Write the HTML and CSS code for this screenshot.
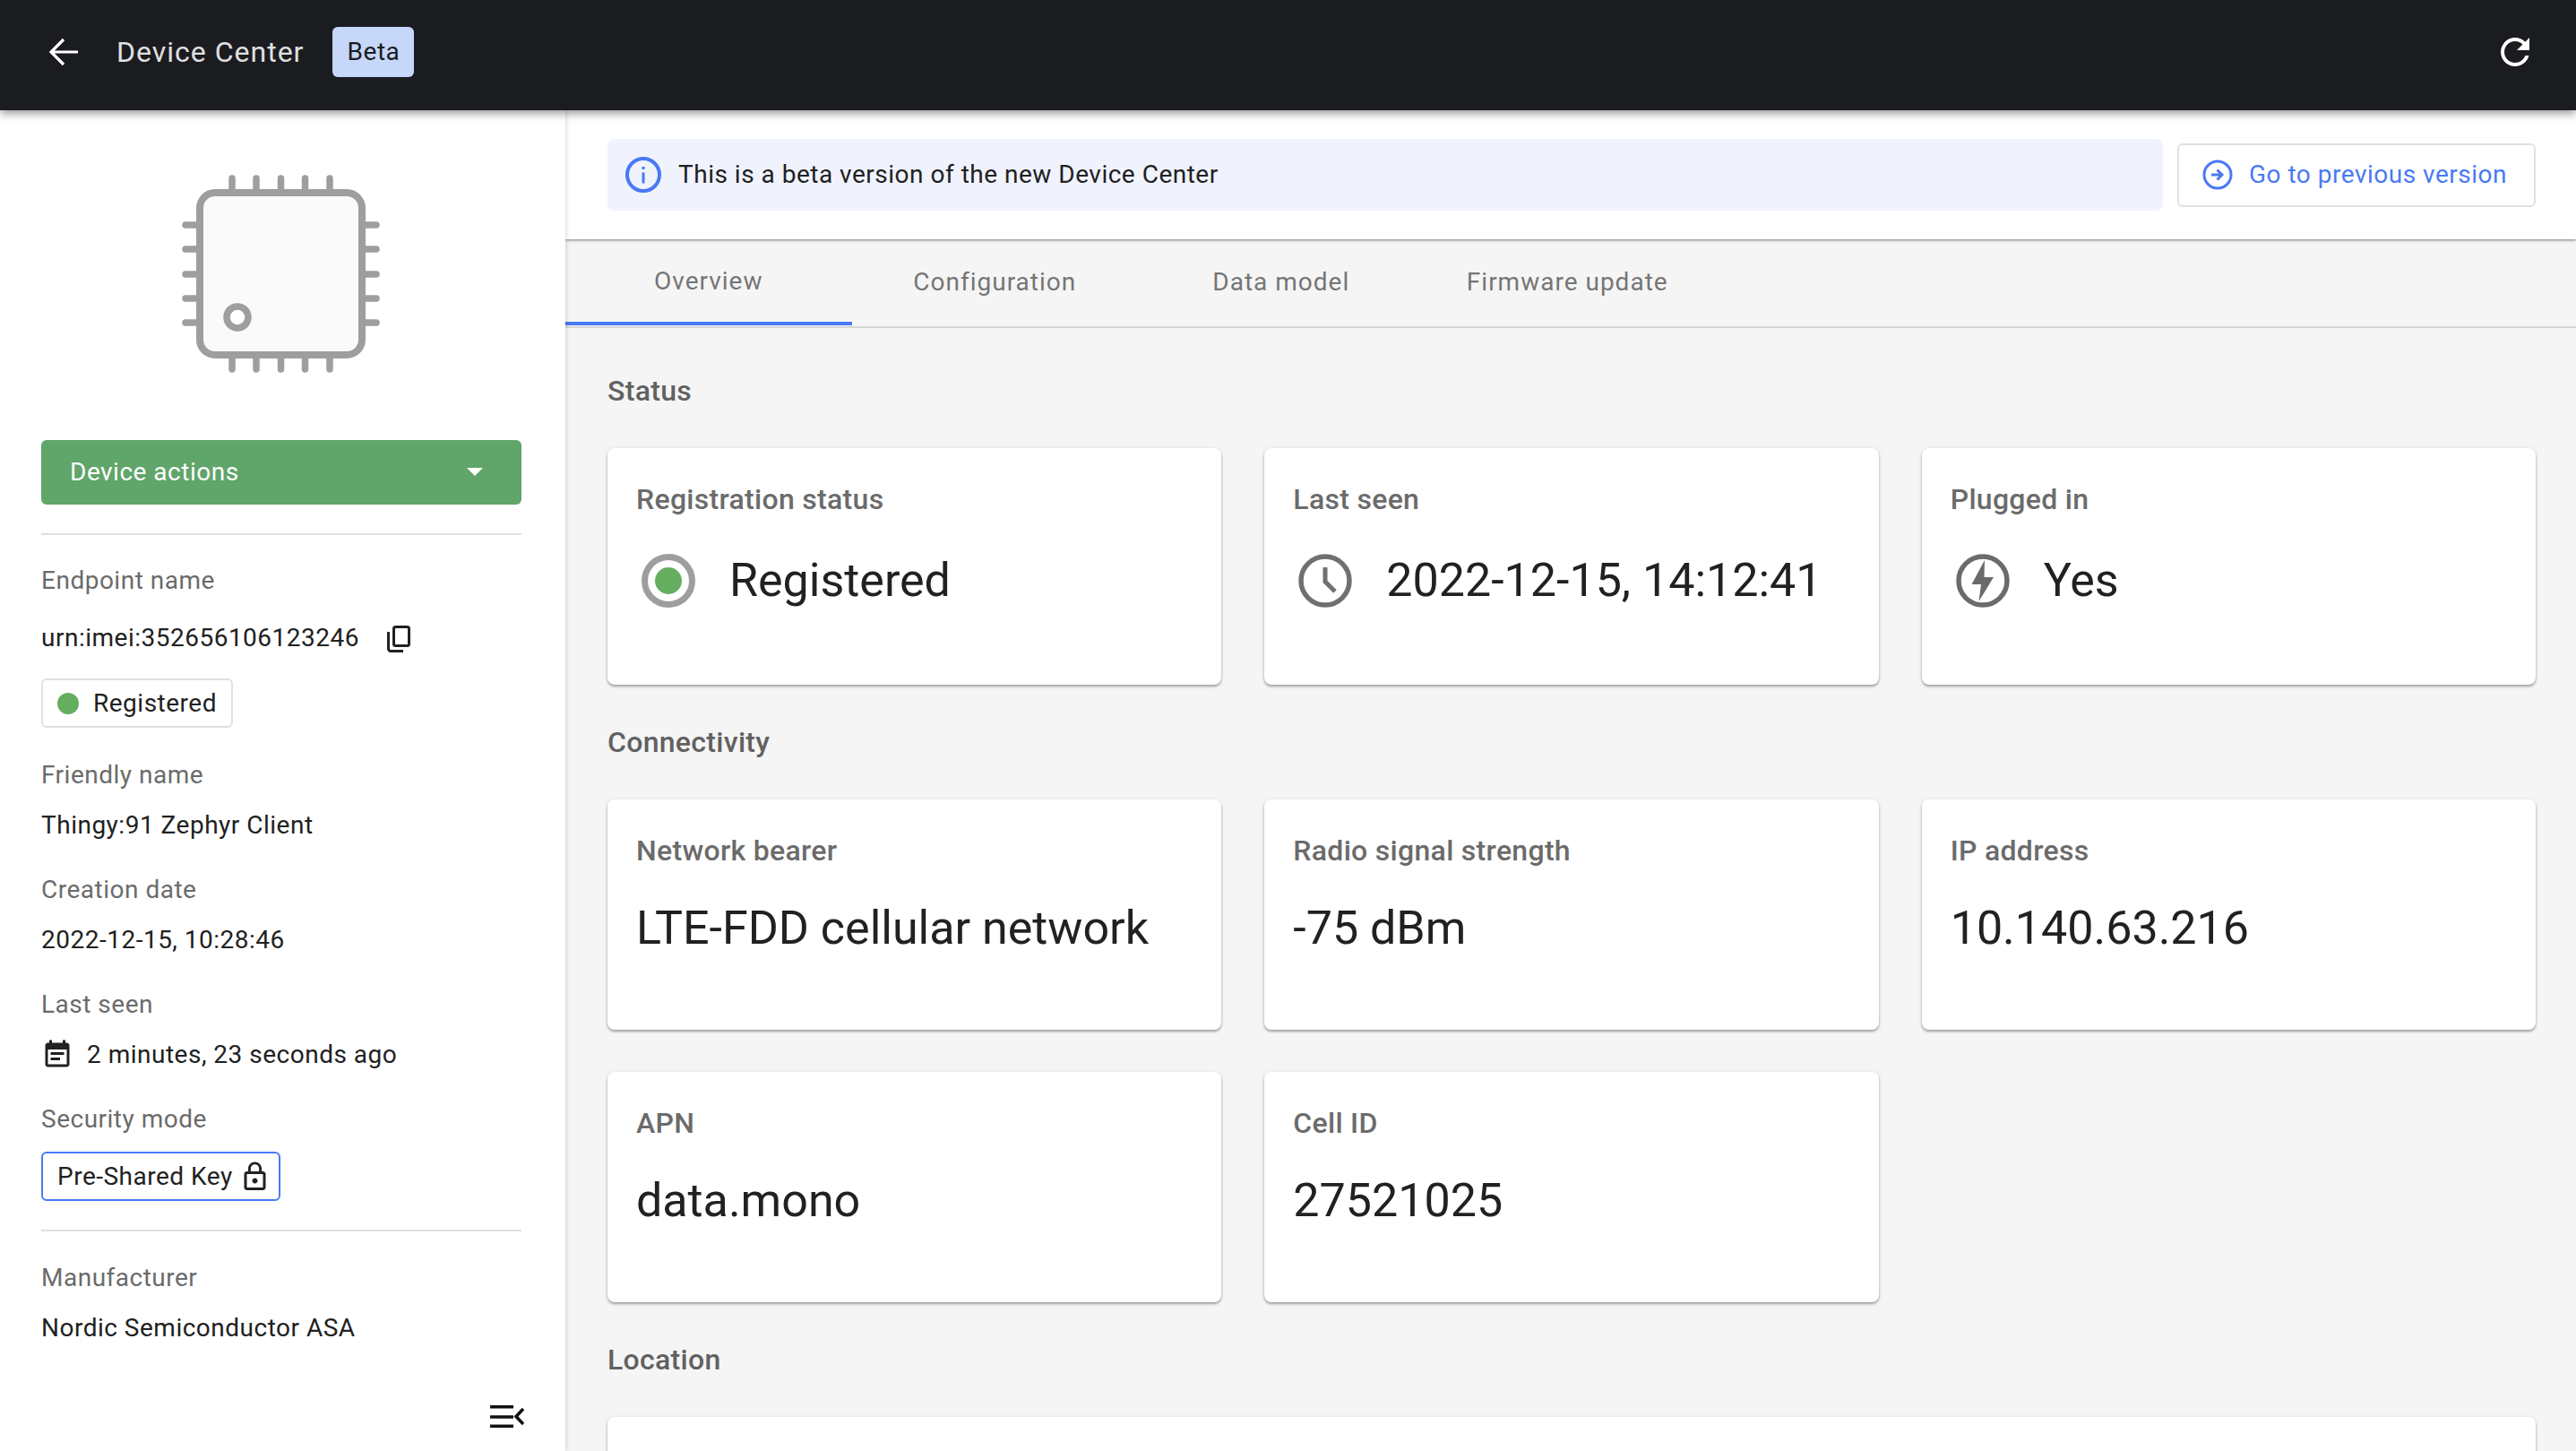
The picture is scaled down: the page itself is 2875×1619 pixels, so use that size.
FILE: index.html
```html
<!DOCTYPE html>
<html lang="en">
<head>
<meta charset="utf-8">
<title>Device Center</title>
<link rel="stylesheet" href="styles.css">
</head>
<body>
<header class="topbar">
  <svg class="back-icon" viewBox="0 0 36 36"><path d="M35 18H5M19 4 5 18l14 14" fill="none" stroke="#fff" stroke-width="3.2"/></svg>
  <span class="app-title">Device Center</span>
  <span class="beta">Beta</span>
  <svg class="refresh-icon" viewBox="0 0 24 24"><path fill="#fff" d="M17.65 6.35C16.2 4.9 14.21 4 12 4c-4.42 0-7.99 3.58-7.99 8s3.57 8 7.99 8c3.73 0 6.84-2.55 7.73-6h-2.08c-.82 2.33-3.04 4-5.65 4-3.31 0-6-2.69-6-6s2.69-6 6-6c1.66 0 3.14.69 4.22 1.78L13 11h7V4l-2.35 2.35z"/></svg>
</header>
<div class="layout">
  <aside class="sidebar">
    <svg class="chip" viewBox="0 0 221 221">
      <g stroke="#9e9e9e" stroke-width="7.5" stroke-linecap="round" fill="none">
        <path d="M56 4v14M83 4v14M110.500 4v14M137.500 4v14M165 4v14M56 203v14M83 203v14M110.500 203v14M137.500 203v14M165 203v14"/>
        <path d="M4 56h14M4 83h14M4 111h14M4 138h14M4 165h14M203 56h14M203 83h14M203 111h14M203 138h14M203 165h14"/>
      </g>
      <rect x="20" y="20" width="181" height="181" rx="17" fill="#fafafa" stroke="#9e9e9e" stroke-width="8"/>
      <circle cx="62" cy="159" r="12" fill="#fff" stroke="#9e9e9e" stroke-width="7.500"/>
    </svg>
    <button class="actions"><span>Device actions</span><i class="caret"></i></button>
    <div class="divider first"></div>
    <div class="label l-first">Endpoint name</div>
    <div class="value v-endpoint"><span>urn:imei:352656106123246</span>
      <svg class="copy-icon" viewBox="0 0 26 30"><path d="M9.500 1.500h13a2 2 0 0 1 2 2v17a2 2 0 0 1-2 2h-13a2 2 0 0 1-2-2v-17a2 2 0 0 1 2-2ZM1.500 7v19a2.500 2.500 0 0 0 2.500 2.500h14" fill="none" stroke="#212121" stroke-width="3"/></svg>
    </div>
    <div class="chip-tag status-tag"><i class="dot"></i>Registered</div>
    <div class="label">Friendly name</div>
    <div class="value">Thingy:91 Zephyr Client</div>
    <div class="label tight">Creation date</div>
    <div class="value">2022-12-15, 10:28:46</div>
    <div class="label tight">Last seen</div>
    <div class="value v-seen">
      <svg class="event-icon" viewBox="0 0 24 24"><path fill="#212121" d="M17 10H7v2h10v-2zm2-7h-1V1h-2v2H8V1H6v2H5c-1.110 0-1.990.9-1.990 2L3 19c0 1.100.89 2 2 2h14c1.100 0 2-.9 2-2V5c0-1.100-.9-2-2-2zm0 16H5V8h14v11zm-5-5H7v2h7v-2z"/></svg>
      <span>2 minutes, 23 seconds ago</span>
    </div>
    <div class="label l-security">Security mode</div>
    <div class="chip-tag key-tag">Pre-Shared Key
      <svg class="lock-icon" viewBox="0 0 24 24"><path fill="#212121" d="M12 17c1.100 0 2-.9 2-2s-.9-2-2-2-2 .9-2 2 .9 2 2 2zm6-9h-1V6c0-2.760-2.240-5-5-5S7 3.240 7 6v2H6c-1.100 0-2 .9-2 2v10c0 1.100.9 2 2 2h12c1.100 0 2-.9 2-2V10c0-1.100-.9-2-2-2zM8.900 6c0-1.710 1.390-3.100 3.100-3.100 1.710 0 3.100 1.390 3.100 3.100v2H8.900V6zM18 20H6V10h12v10z"/></svg>
    </div>
    <div class="divider second"></div>
    <div class="label tight">Manufacturer</div>
    <div class="value">Nordic Semiconductor ASA</div>
    <svg class="collapse-icon" viewBox="0 0 38 25"><path d="M0 1.750h26M0 13h26M0 23.250h26" stroke="#111" stroke-width="3.500"/><path d="M37 4 29 12.500l8 8.500" fill="none" stroke="#111" stroke-width="3.500"/></svg>
  </aside>
  <main class="main">
    <div class="notice-bar">
      <div class="notice">
        <svg class="info-icon" viewBox="0 0 40 40"><circle cx="20" cy="20" r="18" fill="none" stroke="#4a79f5" stroke-width="4"/><path d="M20 17.500v12" stroke="#4a79f5" stroke-width="3"/><circle cx="20" cy="12.500" r="1.800" fill="#4a79f5"/></svg>
        <span>This is a beta version of the new Device Center</span>
      </div>
      <button class="prev-btn">
        <svg class="go-icon" viewBox="0 0 34 34"><circle cx="17" cy="17" r="15" fill="none" stroke="#4a79f5" stroke-width="3"/><path d="M10 17h11M16.500 11.500 22 17l-5.500 5.500" fill="none" stroke="#4a79f5" stroke-width="3"/></svg>
        <span>Go to previous version</span>
      </button>
    </div>
    <nav class="tabs">
      <div class="tab active">Overview</div>
      <div class="tab">Configuration</div>
      <div class="tab">Data model</div>
      <div class="tab">Firmware update</div>
    </nav>
    <section class="content">
      <h2 class="heading h-status">Status</h2>
      <div class="grid tall">
        <div class="card">
          <div class="card-label">Registration status</div>
          <div class="card-value">
            <svg class="card-icon" viewBox="0 0 60 60"><circle cx="30" cy="30" r="26.500" fill="none" stroke="#9e9e9e" stroke-width="7"/><circle cx="30" cy="30" r="15" fill="#66ae5f"/></svg>
            <span>Registered</span>
          </div>
        </div>
        <div class="card">
          <div class="card-label">Last seen</div>
          <div class="card-value">
            <svg class="card-icon" viewBox="0 0 60 60"><circle cx="30" cy="30" r="27" fill="none" stroke="#707070" stroke-width="5.500"/><path d="M30 15v16l11 11" fill="none" stroke="#707070" stroke-width="5"/></svg>
            <span>2022-12-15, 14:12:41</span>
          </div>
        </div>
        <div class="card">
          <div class="card-label">Plugged in</div>
          <div class="card-value">
            <svg class="card-icon" viewBox="0 0 60 60"><circle cx="30" cy="30" r="27" fill="none" stroke="#6b6b6b" stroke-width="5.500"/><path d="M32 7 17.500 34H28l-2.500 19L42 26H31.500Z" fill="#6b6b6b"/></svg>
            <span>Yes</span>
          </div>
        </div>
      </div>
      <h2 class="heading">Connectivity</h2>
      <div class="grid">
        <div class="card"><div class="card-label">Network bearer</div><div class="card-value plain">LTE-FDD cellular network</div></div>
        <div class="card"><div class="card-label">Radio signal strength</div><div class="card-value plain">-75 dBm</div></div>
        <div class="card"><div class="card-label">IP address</div><div class="card-value plain">10.140.63.216</div></div>
        <div class="card"><div class="card-label">APN</div><div class="card-value plain">data.mono</div></div>
        <div class="card"><div class="card-label">Cell ID</div><div class="card-value plain">27521025</div></div>
      </div>
      <h2 class="heading">Location</h2>
      <div class="card location"></div>
    </section>
  </main>
</div>
</body>
</html>
```
FILE: styles.css
```css
* { box-sizing: border-box; }
html, body { margin: 0; height: 100%; }
body {
  width: 2875px; height: 1619px; overflow: hidden;
  display: flex; flex-direction: column;
  font-family: Roboto, "Liberation Sans", sans-serif;
  color: #212121; background: #f5f5f5;
}
.topbar {
  height: 123px; flex: none; position: relative; z-index: 3;
  display: flex; align-items: center;
  padding: 0 45px 8px 52px;
  background: #1b1c20;
  box-shadow: 0 3px 10px rgba(0,0,0,.45);
}
.back-icon { width: 36px; height: 36px; flex: none; }
.app-title { margin-left: 42px; font-size: 32px; color: #e0e0e0; letter-spacing: 1px; }
.beta {
  margin-left: 32px; width: 91px; height: 56px;
  display: flex; align-items: center; justify-content: center;
  font-size: 28px; letter-spacing: .5px; background: #c6d7fa; color: #1b1c20; border-radius: 6px;
}
.refresh-icon { margin-left: auto; margin-right: -1px; width: 48px; height: 48px; }
.layout { flex: 1; display: flex; min-height: 0; }
.sidebar {
  width: 631px; flex: none; position: relative; z-index: 2;
  display: flex; flex-direction: column; align-items: flex-start;
  padding: 0 49px 26px 46px;
  background: #fff;
  box-shadow: 1px 0 5px rgba(0,0,0,.16);
  letter-spacing: .5px;
}
.chip { width: 221px; height: 221px; margin: 72px 0 0 157px; flex: none; }
.actions {
  width: 536px; height: 72px; margin-top: 75px; flex: none;
  display: flex; align-items: center; justify-content: space-between;
  padding: 0 43px 1px 32px; border: 0; border-radius: 6px;
  background: #60a56a; color: #fff; font: 400 28px Roboto, sans-serif; letter-spacing: .5px;
}
.caret { width: 0; height: 0; border: 9px solid transparent; border-top-color: #fff; border-bottom: 0; }
.divider { width: 536px; height: 2px; flex: none; background: #e0e0e0; }
.divider.first { margin-top: 32px; }
.divider.second { margin-top: 32px; }
.label { margin-top: 33px; font-size: 28px; line-height: 40px; color: #6b6b6b; }
.label.tight { margin-top: 32px; }
.label.l-first { margin-top: 31px; }
.label.l-security { margin-top: 32px; }
.value { margin-top: 16px; font-size: 28px; line-height: 40px; }
.v-endpoint { margin-top: 24px; display: flex; align-items: center; }
.copy-icon { width: 26px; height: 30px; margin: 2px 0 0 31px; }
.v-seen { margin-top: 16px; display: flex; align-items: center; }
.event-icon { width: 36px; height: 36px; }
.v-seen span { margin-left: 15px; }
.chip-tag {
  height: 55px; display: flex; align-items: center;
  font-size: 28px; border-radius: 6px; background: #fff;
}
.status-tag { margin-top: 25px; width: 214px; padding-left: 16px; border: 2px solid #e0e0e0; }
.dot { width: 24px; height: 24px; margin-right: 16px; border-radius: 50%; background: #66ae5f; }
.key-tag { margin-top: 16px; width: 267px; padding-left: 16px; border: 2px solid #4a79f5; }
.lock-icon { width: 37px; height: 36px; margin-left: 6px; }
.collapse-icon { width: 38px; height: 25px; margin: auto 0 0 501px; flex: none; }
.main { flex: 1; min-width: 0; overflow: hidden; }
.notice-bar {
  height: 144px; display: flex; align-items: center; gap: 16px;
  padding: 0 45px 0 47px; background: #fff;
  box-shadow: 0 1px 3px rgba(0,0,0,.5);
  position: relative;
}
.notice {
  flex: 1; height: 80px; display: flex; align-items: center;
  padding-left: 20px; border-radius: 8px; background: #f0f3fe;
  font-size: 28px; letter-spacing: .5px;
}
.notice span { position: relative; top: -1px; }
.info-icon { width: 40px; height: 40px; margin-right: 19px; }
.prev-btn {
  width: 400px; height: 71px; display: flex; align-items: center;
  padding: 0 0 0 26px; background: #fff; border: 2px solid #e0e0e0; border-radius: 6px;
  color: #4a79f5; font: 400 28px Roboto, sans-serif; letter-spacing: .5px;
}
.prev-btn span { position: relative; top: -1px; }
.go-icon { width: 34px; height: 34px; margin-right: 18px; }
.tabs { height: 99px; display: flex; border-bottom: 2px solid #d6d6d6; }
.tab {
  width: 319.500px; height: 97px; padding-bottom: 3px; display: flex; align-items: center; justify-content: center;
  font-size: 28px; letter-spacing: 1px; color: #757575;
}
.tab.active { border-bottom: 4px solid #4a79f5; padding-bottom: 0; height: 96px; }
.content { padding: 0 45px 0 47px; }
.heading { margin: 44px 0 0; font-size: 32px; font-weight: 500; line-height: 40px; letter-spacing: .3px; color: #616161; }
.h-status { margin-top: 50px; }
.grid { margin-top: 44px; display: grid; grid-template-columns: repeat(3, 1fr); gap: 47px 48px; }
.card {
  height: 257px; padding: 37px 32px 0; border-radius: 8px; background: #fff;
  box-shadow: 0 2px 3px rgba(0,0,0,.35), 0 0 5px rgba(0,0,0,.06);
}
.grid.tall .card { height: 264px; }
.card-label { font-size: 32px; font-weight: 500; line-height: 40px; letter-spacing: .3px; color: #6b6b6b; }
.card-value { margin-top: 41px; display: flex; align-items: center; gap: 38px; font-size: 52px; line-height: 60px; height: 60px; }
.card-value.plain { margin-top: 37px; }
.card-icon { width: 60px; height: 60px; margin-left: 6px; flex: none; }
.location { margin-top: 44px; height: 200px; }
```
